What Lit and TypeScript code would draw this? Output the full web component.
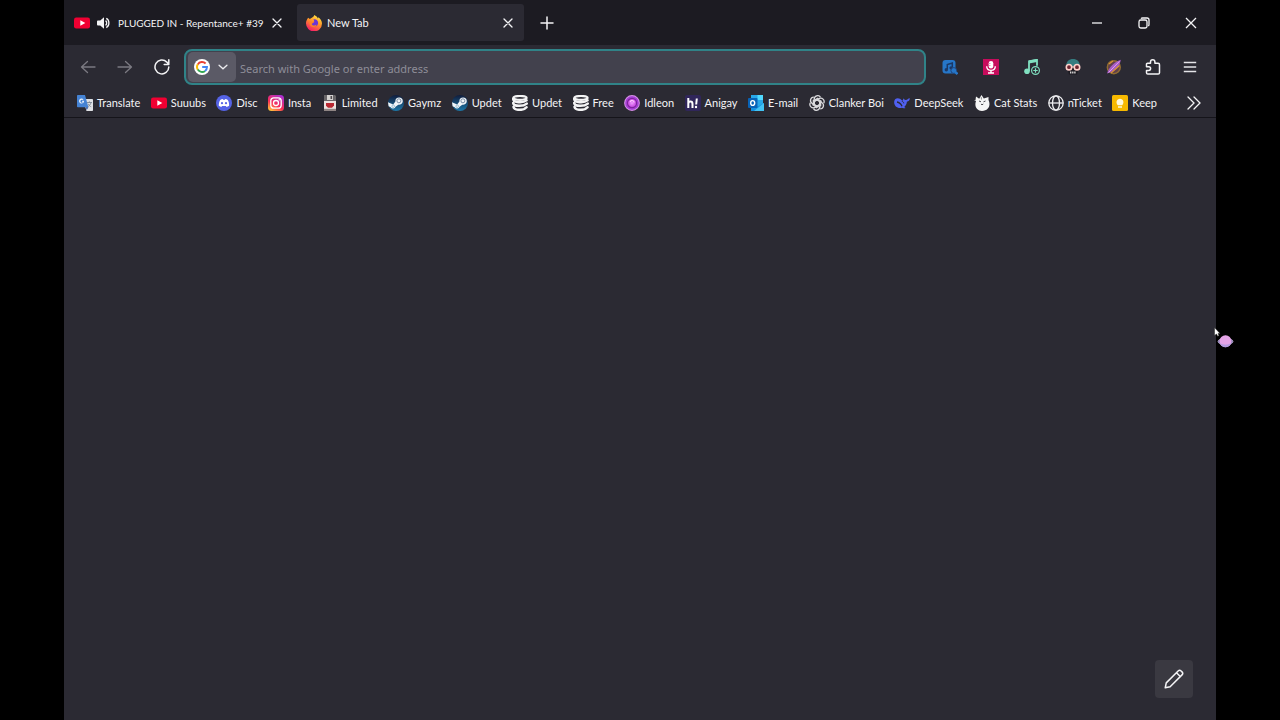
import { LitElement, html, css, svg } from "lit";
import { customElement } from "lit/decorators.js";

const steam = svg`<defs><linearGradient id="s" x2="0" y2="1"><stop stop-color="#101c3c"/><stop offset="1" stop-color="#1d78a8"/></linearGradient></defs>
  <circle cx="8" cy="8" r="8" fill="url(#s)"/><path d="M0 7.2 5.2 9.6 7.4 6.500A3.700 3.700 0 1 1 10.3 9.700L7.6 11.700A2.800 2.800 0 0 1 2.700 12.300L.6 11.200Z" fill="#f1f5f8"/>
  <circle cx="10.9" cy="5.8" r="2" fill="#f1f5f8" stroke="#5a7491" stroke-width=".8"/><circle cx="5.2" cy="11.2" r="1.3" fill="none" stroke="#6f9fbc" stroke-width=".6"/>`;
const stack = svg`<g fill="none" stroke="#f4f4f5" stroke-linecap="round"><ellipse cx="8" cy="2.900" rx="6.600" ry="1.900" stroke-width="2.200"/><path d="M1.200 3.800c0 4.200 10 4.300 13.300 1.600M1.200 8c.5 3.700 10 3.700 13.600.6M1.500 12c1 3.600 10 3.900 13 .2" stroke-width="2.500"/></g>`;
const youtube = svg`<rect y="2.5" width="16" height="11" rx="2.2" fill="#f00032"/><path d="m6.3 5.3 5 2.7-5 2.7z" fill="#fff"/>`;
const close = svg`<path d="m4 4 8 8m0-8-8 8" fill="none" stroke="#f4f4f6" stroke-width="1.3" stroke-linecap="round"/>`;

const icons: Record<string, unknown> = {
  youtube, steam, stack, close,
  translate: svg`<path d="M6 4h9.2a.8.8 0 0 1 .8.8v10.4a.8.8 0 0 1-.8.8H9.5Z" fill="#dfe1e5"/><path d="M.8 0H8l3.4 12.3H.8a.8.8 0 0 1-.8-.8V.8A.8.8 0 0 1 .8 0Z" fill="#4583d4"/><path d="M7 5.8H5v1h1c-.3 1-1.9 1.3-2.5 0-.5-1.5 1-2.8 2.2-1.7l.8-.8C4.5 2.6 1.7 4 2.1 6.7 3 9.5 7.5 8.8 7 5.8Z" fill="#e9f1fc"/><path d="M10 7.5h5M12.4 6.4v1.2m1.6 0c-.4 2-1.7 3-3 4m.2-2.8c.8 1.7 1.8 2.5 3 3" fill="none" stroke="#7e8995" stroke-width=".9"/><path d="m8.8 12.3 2.6 0L9.7 15Z" fill="#2a56a8"/>`,
  discord: svg`<circle cx="8" cy="8" r="8" fill="#5563e6"/><path d="M4.2 5C5 4.4 6 4.1 6.7 4l.4.7h1.8l.4-.7c.9.1 1.8.4 2.5 1 1 1.7 1.5 3.6 1.3 5.7-.8.7-1.7 1-2.6 1.2l-.6-1H6l-.6 1c-.9-.2-1.8-.5-2.6-1.2C2.7 8.6 3.200 6.700 4.200 5Z" fill="#fff"/><circle cx="6" cy="8.200" r="1.100" fill="#5563e6"/><circle cx="10" cy="8.200" r="1.100" fill="#5563e6"/>`,
  insta: svg`<defs><linearGradient id="i" x1=".2" y1="1" x2=".8" y2="0"><stop stop-color="#ffc53a"/><stop offset=".4" stop-color="#fa2d55"/><stop offset="1" stop-color="#a82fd6"/></linearGradient></defs><rect width="16" height="16" rx="3.500" fill="url(#i)"/><g fill="none" stroke="#fff" stroke-width="1.300"><rect x="2.800" y="2.800" width="10.400" height="10.400" rx="3"/><circle cx="8" cy="8" r="2.500"/></g><circle cx="11.200" cy="4.800" r=".7" fill="#fff"/>`,
  limited: svg`<path d="M2 0h11l1 1v5H2Z" fill="#686568"/><path d="M5 0h6v5H5Z" fill="#d5d2d1"/><path d="M8.500 1h1.600v3H8.500Z" fill="#514c50"/><path d="M2 6h12v9.500H2Z" fill="#ede3e0"/><path d="M4 8h8v2.500l-2 2.200H6l-2-2Z" fill="#b82832"/><path d="M2 13.800h12V16H2Z" fill="#8f8584"/>`,
  idleon: svg`<defs><radialGradient id="p"><stop stop-color="#ef9bff"/><stop offset=".55" stop-color="#c648e0"/><stop offset="1" stop-color="#8a32cc"/></radialGradient></defs><circle cx="8" cy="8" r="7.300" fill="url(#p)" stroke="#d58be6" stroke-width="1.200"/><circle cx="8" cy="8" r="4.600" fill="none" stroke="#7d249c" stroke-width="1.200"/><path d="M6 7c1-2.200 4-2 4.200.5" fill="none" stroke="#ffc8ff" stroke-width="1.200"/>`,
  anigay: svg`<rect width="16" height="16" rx="2" fill="#30265a"/><path d="M3.300 3v10m0-4c0-3.300 4.200-3.300 4.200 0v4M11.800 3.500l-.6 6" fill="none" stroke="#fff" stroke-width="2"/><circle cx="11" cy="12" r="1.200" fill="#fff"/>`,
  outlook: svg`<path d="M3 0h12v15H3Z" fill="#28a8e8"/><path d="M9.500 0H15v5H9.500Z" fill="#50d9ff"/><path d="M3 8l7 3.500L16 8v8H3Z" fill="#1490df"/><path d="M16 8v8H6Z" fill="#42c3f4"/><rect y="3" width="9.500" height="10" rx="1" fill="#0863b7"/><ellipse cx="4.700" cy="8" rx="2" ry="2.400" fill="none" stroke="#fff" stroke-width="1.400"/>`,
  openai: svg`<g fill="none" stroke="#d9d9dc" stroke-width="1.300">${[0, 60, 120, 180, 240, 300].map(a => svg`<path transform="rotate(${a} 8 8)" d="M5.200 9.500V4.200c0-3.600 4.500-4.800 6.300-1.900M5.200 6.400 8.900 4.300l3.800 2.200"/>`)}</g>`,
  deepseek: svg`<path d="M.2 6.400C.7 3.500 3.300 2.400 6 3.800l2.500 1.900c.8-.6.5-1.600 1-2.400.5 1 1.200 1.800 2.300 1.700 1.600 0 2-1.500 4.100-1.700-.1 2-1.300 3.200-3 3.400-.2 2.400-1.300 4.100-2.700 5.200l1.400 1c-1.500.7-2.900.4-3.800-.1C3.200 13.800-.3 10.600.2 6.400Z" fill="#5060f0"/><path d="M3 7c2.400.3 4.200 2.400 5 4.200" fill="none" stroke="#2b2a33" stroke-width="1.300"/><path d="M7.800 6.400c1.200.1 1.900.8 2 2" fill="none" stroke="#2b2a33" stroke-width=".9"/>`,
  cat: svg`<path d="m1.500 5 .5-3.500L5.200 3.700 7.500 0 9.800 3.500 14.500 2v3c2.500 5 .3 11-6.500 11C3 16 0 11.300 2 6L0 5Z" fill="#f6f6f6"/><path d="m5 6 2 .8M9.500 6.800l2-.8M7 9l1 .8 1.300-.8" fill="none" stroke="#34343a" stroke-width=".9"/><path d="M7.200 2 7.500 4.500" stroke="#777" stroke-width=".8"/>`,
  globe: svg`<g fill="none" stroke="#ededf0" stroke-width="1.300"><circle cx="8" cy="8" r="7.200"/><ellipse cx="8" cy="8" rx="3.500" ry="7.200"/><path d="M.8 8h14.400"/></g>`,
  keep: svg`<rect width="16" height="16" rx="1.500" fill="#f7b900"/><path d="M5.800 10.200C3.300 7.600 4.800 3.800 8 3.800s4.700 3.800 2.200 6.400ZM6 11.200h4v1.500H6Z" fill="#fff9dc"/>`,
  speaker: svg`<path d="M1 5.200h2.700L8 1.500v13l-4.300-3.700H1a1 1 0 0 1-1-1V6.200a1 1 0 0 1 1-1Z" fill="#f4f4f6"/><path d="M9.800 5.300c1.700 1.200 1.700 4.200 0 5.400M10.600 2.800c4 1.800 4 8.600 0 10.400" fill="none" stroke="#f4f4f6" stroke-width="1.500"/>`,
  firefox: svg`<defs><linearGradient id="f" x1=".8" y1="0" x2=".3" y2="1"><stop stop-color="#fff04a"/><stop offset=".45" stop-color="#ff9527"/><stop offset="1" stop-color="#f5156c"/></linearGradient></defs><path d="M2.200 2.800 3.800 4l2-1.200C7 2.200 7.800 1.400 8.300 0c2.400 1.200 3.300 2.500 3.600 3.400l.5-1.200c2 1.500 3.600 4 3.600 6.300A8 8 0 0 1 0 8.300c0-2 .8-3.700 2.200-5.500Z" fill="url(#f)"/><path d="M7.500 4.300c2.500-.7 5 1.300 4.600 4-.3 2.500-2.700 3.800-4.800 3.200-2.200-.5-3.300-2.200-2.700-4l2 .2 1.700-1.300Z" fill="#6c35d6"/><path d="M3.500 7.200c1.500-.8 3-.4 4.500-.2-.5 1.600-2.200 1-2.200 2.200 1 2 3.400 1.200 4.700.2-.6 3.800-6.500 3.200-7-.8Z" fill="#ff8325"/>`,
  google: svg`<circle cx="8" cy="8" r="8" fill="#fff"/><g fill="none" stroke-width="1.900"><path d="M3.800 5.400A5 5 0 0 1 11.600 4.500" stroke="#ea4335"/><path d="M3.800 5.300a5 5 0 0 0 0 5.400" stroke="#fbbc05"/><path d="M3.800 10.600a5 5 0 0 0 7.300 1.300" stroke="#34a853"/><path d="M8.200 8H13a5 5 0 0 1-1.900 3.900" stroke="#4285f4"/></g>`,
  plus: svg`<path d="M8 2v12M2 8h12" stroke="#f4f4f6" stroke-width="1.500" stroke-linecap="round"/>`,
  min: svg`<path d="M3 8h10" stroke="#f4f4f6" stroke-width="1.300"/>`,
  restore: svg`<g fill="none" stroke="#f4f4f6" stroke-width="1.300"><rect x="3" y="5" width="8" height="8" rx="1.800"/><path d="M5 3.700c.4-.5.800-.7 1.500-.7H11a2 2 0 0 1 2 2v4.500c0 .7-.2 1.100-.7 1.500"/></g>`,
  winclose: svg`<path d="m3 3 10 10m0-10L3 13" stroke="#f4f4f6" stroke-width="1.300"/>`,
  back: svg`<path d="M15 8H1.500m6-5.500L1.500 8l6 5.500" fill="none" stroke="#7b7a82" stroke-width="1.300" stroke-linecap="round" stroke-linejoin="round"/>`,
  forward: svg`<path d="M1 8h13.500m-6-5.500 6 5.500-6 5.500" fill="none" stroke="#7b7a82" stroke-width="1.300" stroke-linecap="round" stroke-linejoin="round"/>`,
  reload: svg`<path d="M14.800 8a6.900 6.900 0 1 1-2-4.900l1.700 2M14.800.8v4.600h-4.600" fill="none" stroke="#f4f4f6" stroke-width="1.500" stroke-linecap="round" stroke-linejoin="round"/>`,
  chevron: svg`<path d="m3.500 6 4.500 4 4.500-4" fill="none" stroke="#ededf0" stroke-width="1.500" stroke-linecap="round"/>`,
  shazam: svg`<rect x=".5" y="1" width="13" height="13.500" rx="3" fill="#2676c8"/><path d="M5.300 10.500V5.500l5-1.500v4.500" fill="none" stroke="#1b3866" stroke-width="1.500"/><circle cx="4.300" cy="10.700" r="1.700" fill="#1b3866"/><circle cx="9" cy="8.800" r="1.600" fill="#1b3866"/><circle cx="11.800" cy="11.500" r="2.900" fill="#2676c8" stroke="#20396a" stroke-width=".8"/><path d="m13 13 2.500 2" stroke="#2676c8" stroke-width="2.500"/>`,
  mic: svg`<path d="M0 0h16v16H0Z" fill="#c70c5c"/><rect x="5.700" y="2" width="4.600" height="7.500" rx="2.300" fill="#fff"/><path d="M3.700 7.200c0 5.500 8.600 5.500 8.600 0M8 11.500v2.700M5 14h6" fill="none" stroke="#fff" stroke-width="1.400"/><path d="M5.500 4.500h2m-2 2h2" stroke="#df6b9c" stroke-width=".7"/>`,
  music: svg`<path d="M5 12V2.300L13 .8v6" fill="none" stroke="#80dfc0" stroke-width="1.800"/><path d="M5 1.500 13 0v3L5 4.500Z" fill="#80dfc0"/><circle cx="3" cy="12.300" r="2.800" fill="#80dfc0"/><circle cx="11.500" cy="11.500" r="3.900" fill="#2b2a33" stroke="#80dfc0" stroke-width="1.200"/><path d="M11.500 9.300v4.400m-2.200-2.200h4.400" stroke="#80dfc0" stroke-width="1.200"/>`,
  skull: svg`<path d="M1.200 7.500C1.200 2 4 0 8 0s6.800 2 6.800 7.500Z" fill="#357c80"/><path d="M2 8h12l-2 7.500H4Z" fill="#1d1b22"/><path d="M5 13.500h6" stroke="#d8d5d5" stroke-width="1.800" stroke-dasharray="1.400 .7"/><circle cx="4" cy="8.200" r="2.700" fill="#6c2530" stroke="#ffd1cb" stroke-width="1.600"/><circle cx="12" cy="8.200" r="2.700" fill="#6c2530" stroke="#ffd1cb" stroke-width="1.600"/><path d="M6.500 8h3" stroke="#ffd1cb" stroke-width="1.200"/>`,
  planet: svg`<circle cx="7.800" cy="8.200" r="6.500" fill="#604049" stroke="#926c32" stroke-width="1.400"/><path d="M1 14.500C3 8 8 3.500 14.800.8 14 7 9.500 12 1 14.500Z" fill="#a65cc5"/><path d="m2.500 13.500 11-11.200" stroke="#e3a2ec" stroke-width="1"/><path d="m5 14 8.500-7.500M3 5l4-3" stroke="#d99435" stroke-width="1.200"/>`,
  puzzle: svg`<path d="M1.500 5.200a.9.900 0 0 1 .9-.9h3.100V3a2.200 2.200 0 0 1 4.400 0v1.300h3.200c.8 0 1.400.6 1.400 1.400v8c0 .8-.6 1.400-1.400 1.400H2.900c-.8 0-1.400-.6-1.400-1.400v-2.300h2.300a1.800 1.800 0 0 0 0-3.600H1.500Z" fill="none" stroke="#f4f4f6" stroke-width="1.500" stroke-linejoin="round"/>`,
  menu: svg`<path d="M1.800 3.500h12.400M1.800 8h12.400M1.800 12.500h12.400" stroke="#e4e4e8" stroke-width="1.500"/>`,
  more: svg`<path d="m2 2 6 6-6 6m6-12 6 6-6 6" fill="none" stroke="#f4f4f6" stroke-width="1.300" stroke-linecap="round"/>`,
  pencil: svg`<path d="m1 15 .8-3.900L11.300 1.600a1.700 1.700 0 0 1 2.400 0l.7.7a1.700 1.700 0 0 1 0 2.400L4.900 14.200ZM10 3l3 3" fill="none" stroke="#f4f4f6" stroke-width="1.200" stroke-linejoin="round"/>`,
};

const icon = (name: string, size = "") =>
  html`<svg class="icon ${size}" viewBox="0 0 16 16" aria-hidden="true">${icons[name]}</svg>`;

const bookmarks = [
  ["translate", "Translate"], ["youtube", "Suuubs"], ["discord", "Disc"], ["insta", "Insta"],
  ["limited", "Limited"], ["steam", "Gaymz"], ["steam", "Updet"], ["stack", "Updet"],
  ["stack", "Free"], ["idleon", "Idleon"], ["anigay", "Anigay"], ["outlook", "E-mail"],
  ["openai", "Clanker Boi"], ["deepseek", "DeepSeek"], ["cat", "Cat Stats"], ["globe", "nTicket"], ["keep", "Keep"],
];
const extensions = [
  ["shazam", "Find song"], ["mic", "Voice"], ["music", "Add music"], ["skull", "Reader"], ["planet", "Themes"],
];

@customElement("app-root")
export class AppRoot extends LitElement {
  static styles = css`
    :host { display: block; min-height: 100vh; background: #000; color: #f4f4f6; font: 11px/16px Lato, "Open Sans", sans-serif; }
    * { box-sizing: border-box; }
    button { border: 0; padding: 0; background: none; color: inherit; font: inherit; display: flex; align-items: center; justify-content: center; flex: none; }
    a { color: inherit; text-decoration: none; }
    .icon { width: 16px; height: 16px; display: block; flex: none; }
    .small { width: 14px; height: 14px; }
    .large { width: 20px; height: 20px; }
    .window { margin: 0 5%; min-height: 100vh; background: #2b2a33; display: flex; flex-direction: column; }
    .tabs { height: 45px; padding: 4px 2px 4px 0; background: #1c1b22; display: flex; align-items: center; }
    .tab { height: 37px; display: flex; align-items: center; border-radius: 3px; padding: 0 8px 0 10px; }
    .playing { width: 233px; gap: 7px; padding-right: 12px; }
    .active { width: 227px; padding-left: 9px; gap: 5px; background: #2b2a33; }
    .title { flex: 1; min-width: 0; overflow: hidden; white-space: nowrap; }
    .playing .title { margin-right: -8px; font-size: 10px; }
    .add { width: 45px; height: 36px; }
    .controls { margin-left: auto; display: flex; }
    .controls button { width: 47px; height: 36px; }
    .nav { height: 44px; padding: 0 8px 0 5px; display: flex; align-items: center; }
    .nav button { width: 37px; height: 36px; }
    .address { flex: 1; height: 36px; margin: 0 3px 0 4px; padding: 2px; display: flex; align-items: center; background: #42414d; border: 2px solid #308388; border-radius: 8px; }
    .address .engine { width: 48px; height: 30px; gap: 6px; border-radius: 5px; background: #5b5a66; }
    .address input { flex: 1; min-width: 0; border: 0; outline: 0; padding: 4px 4px 0; background: none; color: #f4f4f6; font: 11px/16px "Noto Sans", sans-serif; }
    .address input::placeholder { color: #8e8d98; opacity: 1; }
    .nav .ext { width: 41px; }
    .bookbar { height: 29px; padding: 0 14px 0 13px; display: flex; align-items: center; border-bottom: 1px solid #15141a; }
    .bookmarks { flex: 1; min-width: 0; display: flex; justify-content: space-between; margin-right: 29px; }
    .bookmark { display: flex; align-items: center; gap: 4px; white-space: nowrap; }
    .page { flex: 1; display: flex; align-items: flex-end; justify-content: flex-end; padding: 22px 23px; }
    .edit { width: 38px; height: 38px; border-radius: 4px; background: #3a3941; }
    .pointer { position: absolute; left: 1213px; top: 326px; width: 22px; height: 24px; pointer-events: none; }
  `;

  render() {
    return html`
      <div class="window">
        <header class="tabs">
          <div class="tab playing">${icon("youtube")}${icon("speaker", "small")}
            <span class="title">PLUGGED IN - Repentance+ #39</span>
            <button aria-label="Close tab">${icon("close")}</button></div>
          <div class="tab active">${icon("firefox")}<span class="title">New Tab</span>
            <button aria-label="Close tab">${icon("close")}</button></div>
          <button class="add" aria-label="New tab">${icon("plus")}</button>
          <div class="controls">
            <button aria-label="Minimize">${icon("min")}</button>
            <button aria-label="Restore">${icon("restore")}</button>
            <button aria-label="Close window">${icon("winclose")}</button>
          </div>
        </header>
        <nav class="nav">
          <button aria-label="Back">${icon("back")}</button>
          <button aria-label="Forward">${icon("forward")}</button>
          <button aria-label="Reload">${icon("reload")}</button>
          <form class="address" @submit=${(e: Event) => e.preventDefault()}>
            <button type="button" class="engine" aria-label="Search engine">${icon("google")}${icon("chevron", "small")}</button>
            <input aria-label="Address" placeholder="Search with Google or enter address">
          </form>
          ${extensions.map(([i, l]) => html`<button class="ext" aria-label=${l}>${icon(i)}</button>`)}
          <button aria-label="Extensions">${icon("puzzle")}</button>
          <button aria-label="Menu">${icon("menu")}</button>
        </nav>
        <div class="bookbar">
          <div class="bookmarks">${bookmarks.map(([i, l]) => html`<a class="bookmark" href="#">${icon(i)}<span>${l}</span></a>`)}</div>
          <button aria-label="More bookmarks">${icon("more")}</button>
        </div>
        <main class="page"><button class="edit" aria-label="Customize page">${icon("pencil", "large")}</button></main>
      </div>
      <svg class="pointer" viewBox="0 0 22 24" aria-hidden="true">
        <path d="M1.500 1.500v8l2-1.500 1.200 2.300 1.300-.7L5 7.500h2Z" fill="#fff" stroke="#222" stroke-width=".5"/>
        <ellipse cx="12.500" cy="15.500" rx="7.500" ry="3.200" fill="#8177ae" stroke="#d0c4ec" stroke-width=".7"/>
        <circle cx="12.500" cy="15.300" r="6" fill="#e3a3e6"/><path d="M7 17c3 2.200 8 2.200 11 0-1.500 5.800-9.500 5.800-11 0Z" fill="#b39be0"/>
      </svg>`;
  }
}
